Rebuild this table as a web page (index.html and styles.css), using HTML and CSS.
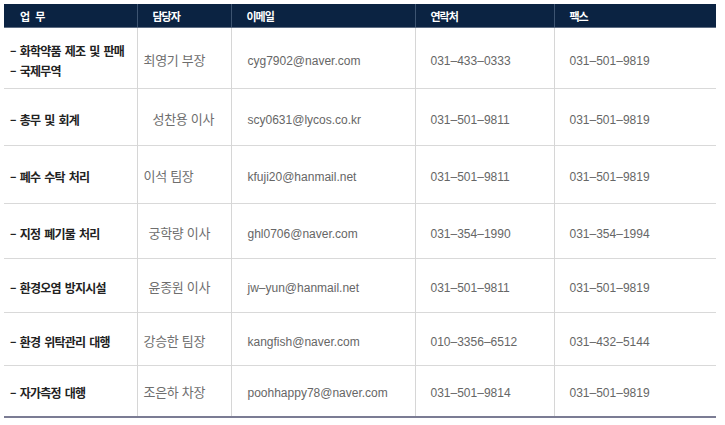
FILE: index.html
```html
<!DOCTYPE html>
<html lang="ko">
<head>
<meta charset="utf-8">
<title>담당자 연락처</title>
<link rel="stylesheet" href="styles.css">
</head>
<body>
<table class="contacts">
  <colgroup>
    <col class="c-task">
    <col class="c-person">
    <col class="c-mail">
    <col class="c-tel">
    <col class="c-fax">
  </colgroup>
  <thead>
    <tr>
      <th class="h-task">업 무</th>
      <th>담당자</th>
      <th>이메일</th>
      <th>연락처</th>
      <th>팩스</th>
    </tr>
  </thead>
  <tbody>
    <tr class="r1">
      <td class="task">– 화학약품 제조 및 판매<br>– 국제무역</td>
      <td class="person">최영기 부장</td>
      <td class="mail">cyg7902@naver.com</td>
      <td class="num">031–433–0333</td>
      <td class="num">031–501–9819</td>
    </tr>
    <tr class="r2">
      <td class="task">– 총무 및 회계</td>
      <td class="person wide">성찬용 이사</td>
      <td class="mail">scy0631@lycos.co.kr</td>
      <td class="num">031–501–9811</td>
      <td class="num">031–501–9819</td>
    </tr>
    <tr class="r3">
      <td class="task">– 폐수 수탁 처리</td>
      <td class="person">이석 팀장</td>
      <td class="mail">kfuji20@hanmail.net</td>
      <td class="num">031–501–9811</td>
      <td class="num">031–501–9819</td>
    </tr>
    <tr class="r4">
      <td class="task">– 지정 폐기물 처리</td>
      <td class="person mid">궁학량 이사</td>
      <td class="mail">ghl0706@naver.com</td>
      <td class="num">031–354–1990</td>
      <td class="num">031–354–1994</td>
    </tr>
    <tr class="r5">
      <td class="task">– 환경오염 방지시설</td>
      <td class="person mid">윤종원 이사</td>
      <td class="mail">jw–yun@hanmail.net</td>
      <td class="num">031–501–9811</td>
      <td class="num">031–501–9819</td>
    </tr>
    <tr class="r6">
      <td class="task">– 환경 위탁관리 대행</td>
      <td class="person">강승한 팀장</td>
      <td class="mail">kangfish@naver.com</td>
      <td class="num">010–3356–6512</td>
      <td class="num">031–432–5144</td>
    </tr>
    <tr class="r7">
      <td class="task">– 자가측정 대행</td>
      <td class="person">조은하 차장</td>
      <td class="mail">poohhappy78@naver.com</td>
      <td class="num">031–501–9814</td>
      <td class="num">031–501–9819</td>
    </tr>
  </tbody>
</table>
</body>
</html>
```
FILE: styles.css
```css
html, body {
  margin: 0;
  padding: 0;
  background: #ffffff;
}

body {
  padding: 4px 0 0 4px;
  font-family: "Noto Sans CJK KR", "Noto Sans", sans-serif;
}

.contacts {
  border-collapse: collapse;
  table-layout: fixed;
  width: 712px;
  border-bottom: 2px solid #7b7c94;
}

.c-task { width: 133px; }
.c-person { width: 94px; }
.c-mail { width: 184px; }
.c-tel { width: 139px; }
.c-fax { width: 162px; }

.contacts th {
  height: 23px;
  padding: 0 0 0 15px;
  background: #0b2342;
  color: #ffffff;
  font-size: 11px;
  font-weight: 700;
  letter-spacing: -1px;
  text-align: left;
  border-left: 1px solid #3d5471;
  border-bottom: 1px solid #5d6c82;
}

.contacts th.h-task {
  padding-left: 16px;
  border-left: none;
  letter-spacing: 0;
  word-spacing: 2px;
}

.contacts td {
  padding: 5px 0 0 0;
  vertical-align: middle;
  border-left: 1px solid #d6d6d6;
  border-top: 1px solid #d9d9d9;
  color: #666666;
  white-space: nowrap;
}

.contacts tbody tr:first-child td {
  border-top: none;
}

.contacts td.task {
  border-left: none;
  padding-left: 6px;
  font-size: 12px;
  font-weight: 700;
  letter-spacing: -0.8px;
  word-spacing: 1.5px;
  color: #222222;
  line-height: 20px;
}

.contacts td.person {
  padding-left: 6px;
  padding-bottom: 3px;
  font-size: 13px;
  letter-spacing: -0.3px;
  color: #6e6e6e;
}

.contacts td.person.wide { padding-left: 15px; }
.contacts td.person.mid { padding-left: 11px; }

.contacts td.mail {
  padding-left: 16px;
  font-family: "Liberation Sans", Arial, sans-serif;
  font-size: 12px;
  color: #666666;
}

.contacts td.num {
  padding-left: 15px;
  font-family: "Liberation Sans", Arial, sans-serif;
  font-size: 12px;
  color: #666666;
}

.r1 { height: 61px; }
.r2 { height: 57px; }
.r3 { height: 58px; }
.r4 { height: 55px; }
.r5 { height: 54px; }
.r6 { height: 53px; }
.r7 { height: 51px; }
```
